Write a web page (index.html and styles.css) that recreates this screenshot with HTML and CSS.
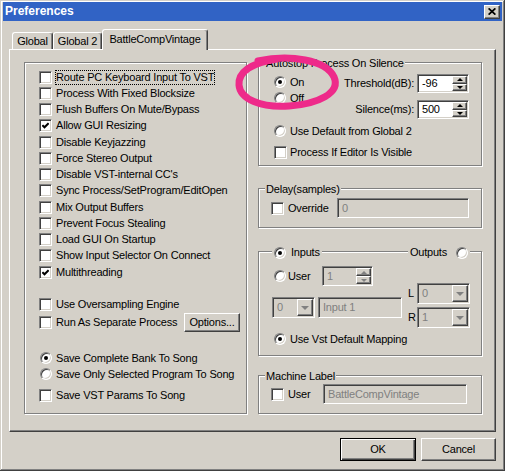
FILE: index.html
```html
<!DOCTYPE html>
<html>
<head>
<meta charset="utf-8">
<title>Preferences</title>
<link rel="stylesheet" href="styles.css">
</head>
<body>
<div class="window">
  <div class="titlebar">
    <span class="title">Preferences</span>
    <span class="close"><svg width="8" height="7" viewBox="0 0 8 7"><path d="M0.6 0.4 L7.4 6.6 M7.4 0.4 L0.6 6.6" stroke="#000" stroke-width="1.8" fill="none"/></svg></span>
  </div>
  <div class="client">
    <div class="tabs">
      <div class="tab t-global">Global</div>
      <div class="tab t-global2">Global 2</div>
      <div class="tab active t-bcv">BattleCompVintage</div>
    </div>
    <div class="panel">
      <div class="group left-group">
        <div class="rows13">
          <div class="row"><span class="cb"></span><span class="lbl focus">Route PC Keyboard Input To VST</span></div>
          <div class="row"><span class="cb"></span><span class="lbl">Process With Fixed Blocksize</span></div>
          <div class="row"><span class="cb"></span><span class="lbl">Flush Buffers On Mute/Bypass</span></div>
          <div class="row"><span class="cb"><svg width="7" height="7" viewBox="0 0 7 7"><path d="M0.4 3.2 L2.5 5.3 L6.6 1.2" stroke="#000" stroke-width="2" fill="none"/></svg></span><span class="lbl">Allow GUI Resizing</span></div>
          <div class="row"><span class="cb"></span><span class="lbl">Disable Keyjazzing</span></div>
          <div class="row"><span class="cb"></span><span class="lbl">Force Stereo Output</span></div>
          <div class="row"><span class="cb"></span><span class="lbl">Disable VST-internal CC's</span></div>
          <div class="row"><span class="cb"></span><span class="lbl">Sync Process/SetProgram/EditOpen</span></div>
          <div class="row"><span class="cb"></span><span class="lbl">Mix Output Buffers</span></div>
          <div class="row"><span class="cb"></span><span class="lbl">Prevent Focus Stealing</span></div>
          <div class="row"><span class="cb"></span><span class="lbl">Load GUI On Startup</span></div>
          <div class="row"><span class="cb"></span><span class="lbl">Show Input Selector On Connect</span></div>
          <div class="row"><span class="cb"><svg width="7" height="7" viewBox="0 0 7 7"><path d="M0.4 3.2 L2.5 5.3 L6.6 1.2" stroke="#000" stroke-width="2" fill="none"/></svg></span><span class="lbl">Multithreading</span></div>
        </div>
        <div class="row sec-over"><span class="cb"></span><span class="lbl">Use Oversampling Engine</span></div>
        <div class="row row-run"><span class="cb"></span><span class="lbl">Run As Separate Process</span><span class="raised btn-options">Options...</span></div>
        <div class="row sec-save"><span class="rb on"></span><span class="lbl">Save Complete Bank To Song</span></div>
        <div class="row"><span class="rb"></span><span class="lbl">Save Only Selected Program To Song</span></div>
        <div class="row sec-params"><span class="cb"></span><span class="lbl">Save VST Params To Song</span></div>
      </div>

      <div class="right-col">
        <div class="group autostop">
          <span class="gtitle">Autostop Process On Silence</span>
          <div class="as-top">
            <div class="as-radios">
              <div class="row"><span class="rb on"></span><span class="lbl">On</span></div>
              <div class="row"><span class="rb"></span><span class="lbl">Off</span></div>
            </div>
            <div class="as-fields">
              <span class="flabel">Threshold(dB):</span>
              <div class="field spin"><span class="val">-96</span><span class="arrows"><span class="raised a-up"></span><span class="raised a-dn"></span></span></div>
              <span class="flabel">Silence(ms):</span>
              <div class="field spin"><span class="val">500</span><span class="arrows"><span class="raised a-up"></span><span class="raised a-dn"></span></span></div>
            </div>
          </div>
          <div class="row as-default"><span class="rb"></span><span class="lbl">Use Default from Global 2</span></div>
          <div class="row as-editor"><span class="cb"></span><span class="lbl">Process If Editor Is Visible</span></div>
        </div>

        <div class="group delay">
          <span class="gtitle">Delay(samples)</span>
          <div class="row row20"><span class="cb"></span><span class="lbl">Override</span><div class="field disabled delay-edit"><span class="val">0</span></div></div>
        </div>

        <div class="group io">
          <span class="gtitle io-in"><span class="rb on"></span>Inputs</span>
          <span class="gtitle io-out">Outputs<span class="rb"></span></span>
          <div class="io-top">
            <div class="io-left">
              <div class="row row20"><span class="rb"></span><span class="lbl user-lbl">User</span><div class="field disabled spin user-spin"><span class="val">1</span><span class="arrows"><span class="raised a-up dis"></span><span class="raised a-dn dis"></span></span></div></div>
              <div class="combo-row">
                <div class="field disabled combo c-small"><span class="val">0</span><span class="raised drop"></span></div>
                <div class="field disabled input-edit"><span class="val">Input 1</span></div>
              </div>
            </div>
            <div class="io-right">
              <span class="lr">L</span>
              <div class="field disabled combo c-lr"><span class="val">0</span><span class="raised drop"></span></div>
              <span class="lr">R</span>
              <div class="field disabled combo c-lr"><span class="val">1</span><span class="raised drop"></span></div>
            </div>
          </div>
          <div class="row io-vst"><span class="rb on"></span><span class="lbl">Use Vst Default Mapping</span></div>
        </div>

        <div class="group machine">
          <span class="gtitle">Machine Label</span>
          <div class="row row20"><span class="cb"></span><span class="lbl">User</span><div class="field disabled machine-edit"><span class="val">BattleCompVintage</span></div></div>
        </div>
      </div>
    </div>
    <div class="buttons">
      <span class="btn ok">OK</span>
      <span class="btn raised">Cancel</span>
    </div>
  </div>
  <svg class="annotation" width="505" height="471" viewBox="0 0 505 471">
    <path d="M258 61 C290 54, 326 60, 334 77 C341 93, 318 104, 289 106 C261 108, 240 99, 239 85 C238 71, 252 63, 277 59" stroke="#ee2a8a" stroke-width="7" fill="none" stroke-linecap="round"/>
  </svg>
</div>
</body>
</html>
```

FILE: styles.css
```css
* { box-sizing: border-box; }
html, body { margin: 0; padding: 0; }
body {
  width: 505px;
  height: 471px;
  overflow: hidden;
  background: #d4d0c8;
  font-family: "Liberation Sans", Arial, sans-serif;
  font-size: 11px;
  line-height: 13px;
  letter-spacing: -0.2px;
  color: #000;
}

.window {
  position: relative;
  width: 505px;
  height: 471px;
  padding: 2px 3px 3px 3px;
  background: #d4d0c8;
  box-shadow: inset -1px -1px 0 #404040, inset 1px 1px 0 #d4d0c8, inset -2px -2px 0 #808080, inset 2px 2px 0 #fff;
}

.titlebar {
  display: flex;
  align-items: center;
  justify-content: space-between;
  height: 19px;
  padding: 0 2px;
  background: #3163c5;
}
.title { color: #fff; font-weight: bold; font-size: 12px; letter-spacing: 0; }
.close {
  width: 16px;
  height: 14px;
  display: flex;
  align-items: center;
  justify-content: center;
  background: #d4d0c8;
  border: 1px solid;
  border-color: #fff #404040 #404040 #fff;
  box-shadow: inset -1px -1px 0 #808080;
}

.client { padding: 8px 6px 0 6px; }

.tabs {
  display: flex;
  align-items: flex-end;
  height: 20px;
  padding-left: 3px;
}
.tab {
  height: 17px;
  border: 1px solid;
  border-color: #fff #404040 transparent #fff;
  border-bottom: none;
  border-radius: 3px 3px 0 0;
  box-shadow: inset -1px 0 0 #808080;
  text-align: center;
  line-height: 16px;
  background: #d4d0c8;
}
.t-global { width: 41px; }
.t-global2 { width: 49px; }
.tab.active {
  position: relative;
  z-index: 1;
  height: 21px;
  margin-bottom: -1px;
  width: 106px;
  line-height: 18px;
}

.panel {
  display: flex;
  align-items: flex-start;
  gap: 11px;
  height: 383px;
  border: 1px solid;
  border-color: #fff #404040 #404040 #fff;
  box-shadow: inset -1px -1px 0 #808080;
  padding: 12px 0 0 14px;
}

/* group boxes */
.group {
  position: relative;
  border: 1px solid #808080;
  box-shadow: inset 1px 1px 0 #fff, 1px 1px 0 #fff;
}
.gtitle {
  position: absolute;
  top: -6px;
  left: 6px;
  padding: 0 1px;
  background: #d4d0c8;
  display: flex;
  align-items: center;
  white-space: nowrap;
}

.row { display: flex; align-items: center; height: 16px; white-space: nowrap; }
.row20 { height: 20px; }
.lbl { line-height: 13px; }
.focus { outline: 1px dotted #000; }

/* checkbox & radio */
.cb {
  flex: none;
  width: 13px;
  height: 13px;
  margin-right: 4px;
  background: #fff;
  border: 1px solid;
  border-color: #808080 #fff #fff #808080;
  box-shadow: inset 1px 1px 0 #404040, inset -1px -1px 0 #d4d0c8;
  display: flex;
  align-items: center;
  justify-content: center;
}
.rb {
  flex: none;
  position: relative;
  width: 12px;
  height: 12px;
  margin-right: 4px;
  border-radius: 50%;
  background: #fff;
  border: 1px solid;
  border-color: #808080 #fff #fff #808080;
  box-shadow: inset 1px 1px 0 #404040, inset -1px -1px 0 #d4d0c8;
}
.rb.on::after {
  content: "";
  position: absolute;
  left: 3px;
  top: 3px;
  width: 4px;
  height: 4px;
  border-radius: 50%;
  background: #000;
}

/* raised / sunken */
.raised {
  background: #d4d0c8;
  border: 1px solid;
  border-color: #fff #404040 #404040 #fff;
  box-shadow: inset -1px -1px 0 #808080;
}
.field {
  display: flex;
  align-items: center;
  background: #fff;
  padding: 1px;
  border: 1px solid;
  border-color: #808080 #fff #fff #808080;
  box-shadow: inset 1px 1px 0 #404040, inset -1px -1px 0 #d4d0c8;
}
.field .val { flex: 1; padding-left: 3px; white-space: nowrap; overflow: hidden; }
.field.disabled { background: #d4d0c8; color: #808080; }

.spin { width: 52px; height: 19px; align-items: stretch; }
.spin .val { display: flex; align-items: center; }
.arrows { width: 15px; display: flex; flex-direction: column; }
.arrows .raised { flex: 1; display: flex; align-items: center; justify-content: center; }
.a-up::after {
  content: "";
  border-left: 3px solid transparent;
  border-right: 3px solid transparent;
  border-bottom: 3px solid #000;
}
.a-dn::after {
  content: "";
  border-left: 3px solid transparent;
  border-right: 3px solid transparent;
  border-top: 3px solid #000;
}
.dis.a-up::after { border-bottom-color: #808080; }
.dis.a-dn::after { border-top-color: #808080; }

.combo { height: 21px; align-items: stretch; }
.combo .val { display: flex; align-items: center; }
.drop {
  width: 16px;
  display: flex;
  align-items: center;
  justify-content: center;
}
.drop::after {
  content: "";
  border-left: 4px solid transparent;
  border-right: 4px solid transparent;
  border-top: 4px solid #808080;
}

/* left group */
.left-group { width: 223px; height: 352px; padding: 6px 6px 0 14px; }
.left-group .rb { margin-left: 1px; }
.rows13 .row { height: 16.25px; }
.sec-over { margin-top: 16px; }
.row-run { height: 19px; margin-top: 1px; }
.btn-options {
  margin-left: auto;
  width: 56px;
  height: 19px;
  display: flex;
  align-items: center;
  justify-content: center;
}
.sec-save { margin-top: 18px; }
.sec-params { margin-top: 5px; }

/* right column */
.right-col { width: 224px; display: flex; flex-direction: column; }

.autostop { height: 104px; margin-bottom: 22px; padding: 11px 12px 0 15px; }
.autostop .cb { margin-right: 3px; }
.as-top { display: flex; justify-content: space-between; }
.as-fields {
  display: grid;
  grid-template-columns: auto 52px;
  column-gap: 3px;
  row-gap: 7px;
  align-items: center;
}
.flabel { justify-self: end; }
.as-default { margin-top: 4px; }
.as-editor { margin-top: 5px; }

.delay { height: 40px; margin-bottom: 23px; padding: 9px 12px 0 12px; }
.delay-edit { margin-left: auto; width: 132px; height: 20px; }

.io { height: 105px; margin-bottom: 19px; padding: 14px 11px 0 13px; }
.io .gtitle.io-in { left: 13px; padding: 0 2px; }
.io-in .rb { margin-right: 5px; }
.io .gtitle.io-out { left: auto; right: 11px; padding: 0 2px; }
.io-out .rb { margin-left: 9px; margin-right: 0; }
.io-top { display: flex; justify-content: space-between; align-items: flex-start; }
.io-left .rb { margin-left: 2px; margin-right: 2px; }
.user-lbl { width: 34px; }
.user-spin { width: 51px; height: 20px; }
.combo-row { display: flex; gap: 3px; margin-top: 11px; }
.c-small { width: 43px; }
.input-edit { width: 84px; height: 21px; }
.io-right {
  margin-top: 17px;
  display: grid;
  grid-template-columns: 9px 53px;
  row-gap: 3px;
  align-items: center;
}
.c-lr { width: 53px; }
.io-vst { margin-top: 3px; }
.io-vst .rb { margin-left: 2px; }

.machine { height: 39px; padding: 8px 14px 0 12px; }
.machine-edit { margin-left: auto; width: 144px; height: 20px; }

/* dialog buttons */
.buttons { display: flex; justify-content: flex-end; gap: 5px; margin-top: 6px; }
.btn {
  width: 75px;
  height: 23px;
  display: flex;
  align-items: center;
  justify-content: center;
}
.btn.ok {
  width: 76px;
  background: #d4d0c8;
  border: 1px solid #000;
  box-shadow: inset 1px 1px 0 #fff, inset -1px -1px 0 #404040, inset -2px -2px 0 #808080;
}

.annotation {
  position: absolute;
  left: 0;
  top: 0;
  pointer-events: none;
}
```
